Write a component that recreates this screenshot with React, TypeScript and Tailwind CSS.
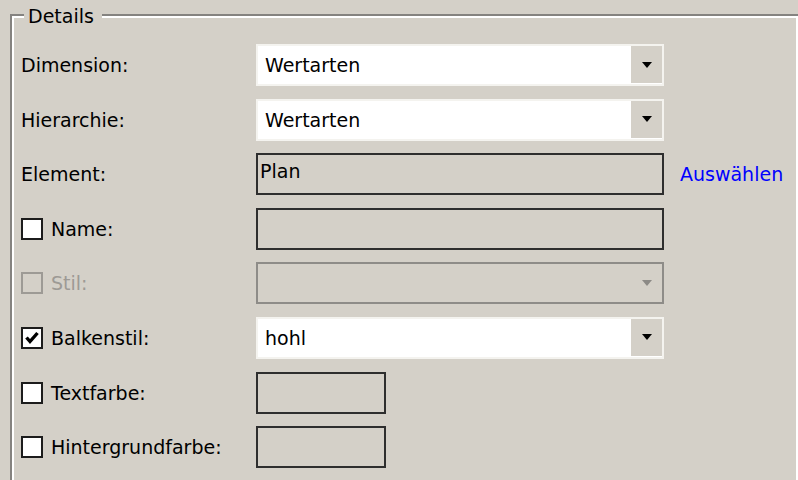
import type { ReactNode } from "react";

const font = { fontFamily: '"DejaVu Sans", Tahoma, sans-serif' };

function Arrow({ disabled }: { disabled?: boolean }) {
  return (
    <svg width="10" height="6" viewBox="0 0 10 6">
      <polygon points="0,0 10,0 5,6" fill={disabled ? "#8c8a86" : "#000"} />
    </svg>
  );
}

function Combo({ value }: { value: string }) {
  return (
    <div className="flex h-[42px] w-[408px] border-2 border-[#f4f3ef] bg-white">
      <div className="flex flex-1 items-center pl-[7px] text-black">{value}</div>
      <div className="mb-[1px] flex w-[31px] items-center justify-center bg-[#d4d0c8]">
        <Arrow />
      </div>
    </div>
  );
}

function Checkbox({ checked, disabled }: { checked?: boolean; disabled?: boolean }) {
  return (
    <div
      className={
        disabled
          ? "mr-[8px] flex h-[22px] w-[22px] shrink-0 items-center justify-center border-2 border-[#9d9a95] bg-[#d4d0c8]"
          : "mr-[8px] flex h-[22px] w-[22px] shrink-0 items-center justify-center border-2 border-[#1c1c1c] bg-white"
      }
    >
      {checked && (
        <svg width="16" height="16" viewBox="0 0 16 16">
          <polyline points="2.5,7.5 6,11.5 13.5,3" fill="none" stroke="#000" strokeWidth="3.4" />
        </svg>
      )}
    </div>
  );
}

function Row({ label, box, children, checkbox }: { label: string; box?: "check" | "checked" | "disabled"; children: ReactNode; checkbox?: boolean }) {
  return (
    <div className="flex h-[42px] items-center">
      <div className={box === "disabled" ? "flex w-[235px] shrink-0 items-center text-[#9d9a95]" : "flex w-[235px] shrink-0 items-center text-black"}>
        {checkbox && <Checkbox checked={box === "checked"} disabled={box === "disabled"} />}
        <span>{label}</span>
      </div>
      {children}
    </div>
  );
}

export default function App() {
  return (
    <div className="relative h-[480px] w-[798px] overflow-hidden bg-[#d4d0c8] text-[19px] leading-[22px]" style={font}>
      <div className="ml-[10px] mt-[14px] h-[600px] border-l-2 border-t-2 border-[#858380]">
        <div className="h-full border-l-2 border-r-2 border-t-2 border-white pl-[7px] pt-[26px]">
          <div className="flex flex-col gap-[12.6px]">
            <Row label="Dimension:">
              <Combo value="Wertarten" />
            </Row>
            <Row label="Hierarchie:">
              <Combo value="Wertarten" />
            </Row>
            <Row label="Element:">
              <div className="h-[42px] w-[408px] border-2 border-[#2e2e2e] pl-[2px] pt-[5px]">Plan</div>
              <span className="ml-[16px] text-[#0000ff]">Auswählen</span>
            </Row>
            <Row label="Name:" checkbox box="check">
              <div className="h-[42px] w-[408px] border-2 border-[#2e2e2e]" />
            </Row>
            <Row label="Stil:" checkbox box="disabled">
              <div className="flex h-[42px] w-[408px] justify-end border-2 border-[#8e8c88]">
                <div className="flex w-[31px] items-center justify-center">
                  <Arrow disabled />
                </div>
              </div>
            </Row>
            <Row label="Balkenstil:" checkbox box="checked">
              <Combo value="hohl" />
            </Row>
            <Row label="Textfarbe:" checkbox box="check">
              <div className="h-[42px] w-[130px] border-2 border-[#2e2e2e]" />
            </Row>
            <Row label="Hintergrundfarbe:" checkbox box="check">
              <div className="h-[42px] w-[130px] border-2 border-[#2e2e2e]" />
            </Row>
          </div>
        </div>
      </div>
      <span className="absolute left-[24px] top-[5px] bg-[#d4d0c8] pl-[4px] pr-[8px] text-black">Details</span>
    </div>
  );
}
